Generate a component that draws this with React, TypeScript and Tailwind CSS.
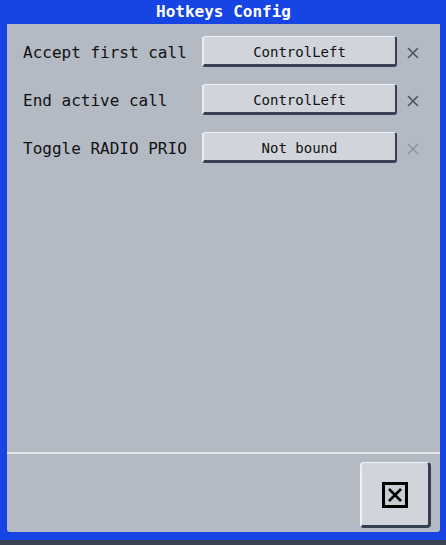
import React from "react";

const mono = { fontFamily: '"DejaVu Sans Mono", "Liberation Mono", monospace' };

function XIcon({ color }: { color: string }) {
  return (
    <svg width="12" height="12" viewBox="0 0 12 12" className="shrink-0">
      <path d="M1 1 L11 11 M11 1 L1 11" stroke={color} strokeWidth="1.6" fill="none" />
    </svg>
  );
}

function Row({ label, value, disabled }: { label: string; value: string; disabled?: boolean }) {
  return (
    <div className="flex items-center h-[31px]">
      <div className="w-[179px] text-[16px] text-[#111] leading-none pt-[2px]">{label}</div>
      <div className="w-[195px] h-[31px] flex items-center justify-center bg-[#d1d5db] rounded-[3px] border-t border-l-2 border-r-2 border-b-[3px] border-t-[#eef0f3] border-l-[#eef0f3] border-r-[#364052] border-b-[#364052] text-[14px] text-[#111] leading-none pt-[3px]">
        {value}
      </div>
      <div className="ml-[10px] pt-[2px]">
        <XIcon color={disabled ? "#8f959f" : "#4b5563"} />
      </div>
    </div>
  );
}

export default function App() {
  return (
    <div className="w-[446px] h-[545px] flex flex-col bg-[#3b4252]" style={mono}>
      <div className="h-[540px] bg-[#1745e3] flex flex-col pl-[7px] pr-[6px] pb-[8px]">
        <div className="h-[24px] flex items-center justify-center text-white font-bold text-[16px] leading-none pb-[1px]">
          Hotkeys Config
        </div>
        <div className="flex-1 bg-[#b4bac4] rounded-b-[3px] flex flex-col">
          <div className="flex-1 pt-[12px] pl-[16px] flex flex-col gap-[17px] h-[428px]">
            <Row label="Accept first call" value="ControlLeft" />
            <Row label="End active call" value="ControlLeft" />
            <Row label="Toggle RADIO PRIO" value="Not bound" disabled />
          </div>
          <div className="h-[2px] bg-[#e3e5e9]" />
          <div className="h-[78px] flex justify-end items-start pt-[8px] pr-[9px]">
            <div className="w-[71px] h-[66px] flex items-center justify-center bg-[#d1d5db] rounded-[4px] border-t border-l-2 border-r-[3px] border-b-[3px] border-t-[#eef0f3] border-l-[#eef0f3] border-r-[#364052] border-b-[#364052]">
              <svg width="26" height="26" viewBox="0 0 26 26" className="mt-[2px]">
                <rect x="1.5" y="1.5" width="23" height="23" fill="#c8ccd3" stroke="#000" strokeWidth="3" />
                <path d="M7 7 L19 19 M19 7 L7 19" stroke="#000" strokeWidth="2.5" fill="none" />
              </svg>
            </div>
          </div>
        </div>
      </div>
    </div>
  );
}
